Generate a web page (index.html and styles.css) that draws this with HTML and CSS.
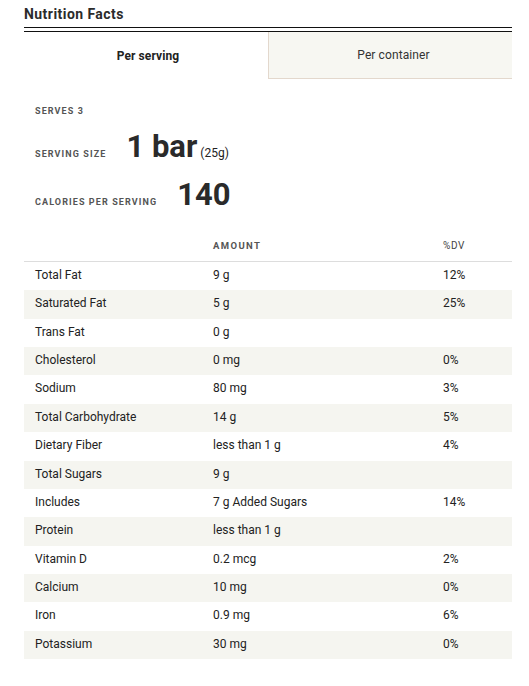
FILE: index.html
```html
<!DOCTYPE html>
<html lang="en">
<head>
<meta charset="utf-8">
<title>Nutrition Facts</title>
<link rel="stylesheet" href="styles.css">
</head>
<body>
<div class="wrap">
  <h2 class="title">Nutrition Facts</h2>
  <div class="tabs">
    <div class="tab active">Per serving</div>
    <div class="tab">Per container</div>
  </div>
  <div class="summary">
    <div class="line serves"><span class="label">Serves 3</span></div>
    <div class="line size"><span class="label">Serving size</span><span class="big">1 bar</span><span class="small">(25g)</span></div>
    <div class="line cal"><span class="label">Calories per serving</span><span class="big">140</span></div>
  </div>
  <div class="table">
    <div class="row head"><span></span><span>Amount</span><span>%DV</span></div>
    <div class="row"><span>Total Fat</span><span>9 g</span><span>12%</span></div>
    <div class="row alt"><span>Saturated Fat</span><span>5 g</span><span>25%</span></div>
    <div class="row"><span>Trans Fat</span><span>0 g</span><span></span></div>
    <div class="row alt"><span>Cholesterol</span><span>0 mg</span><span>0%</span></div>
    <div class="row"><span>Sodium</span><span>80 mg</span><span>3%</span></div>
    <div class="row alt"><span>Total Carbohydrate</span><span>14 g</span><span>5%</span></div>
    <div class="row"><span>Dietary Fiber</span><span>less than 1 g</span><span>4%</span></div>
    <div class="row alt"><span>Total Sugars</span><span>9 g</span><span></span></div>
    <div class="row"><span>Includes</span><span>7 g Added Sugars</span><span>14%</span></div>
    <div class="row alt"><span>Protein</span><span>less than 1 g</span><span></span></div>
    <div class="row"><span>Vitamin D</span><span>0.2 mcg</span><span>2%</span></div>
    <div class="row alt"><span>Calcium</span><span>10 mg</span><span>0%</span></div>
    <div class="row"><span>Iron</span><span>0.9 mg</span><span>6%</span></div>
    <div class="row alt"><span>Potassium</span><span>30 mg</span><span>0%</span></div>
  </div>
</div>
</body>
</html>
```

FILE: styles.css
```css
* { box-sizing: border-box; }
body {
  margin: 0;
  background: #fff;
  font-family: Roboto, "Liberation Sans", Arial, sans-serif;
  color: #222;
}
.wrap {
  margin-left: 24px;
  width: 488px;
}
.title {
  margin: 0;
  padding-top: 5px;
  height: 28px;
  font-size: 14px;
  line-height: 18px;
  font-weight: 700;
  letter-spacing: 0.45px;
  color: #2b2b2b;
  border-bottom: 1px solid #111;
}
.tabs {
  margin-top: 3px;
  border-top: 1px solid #111;
  display: grid;
  grid-template-columns: 244px 244px;
}
.tab {
  height: 47px;
  display: flex;
  align-items: center;
  justify-content: center;
  font-size: 12px;
  letter-spacing: 0.1px;
  color: #333;
  background: #f7f7f2;
  border-left: 1px solid #e3d8cd;
  border-bottom: 1px solid #e3d8cd;
  padding-left: 6px;
}
.tab.active {
  background: #fff;
  border: none;
  font-weight: 700;
  color: #222;
  padding-left: 4px;
}
.summary {
  padding-left: 11px;
  padding-top: 26px;
}
.line {
  display: flex;
  align-items: baseline;
}
.label {
  font-size: 9px;
  line-height: 12px;
  font-weight: 700;
  letter-spacing: 1.1px;
  text-transform: uppercase;
  color: #555;
  margin-right: 20px;
}
.big {
  font-size: 31px;
  line-height: 31px;
  font-weight: 700;
  color: #2a2a2a;
}
.small {
  font-size: 12px;
  margin-left: 3px;
  color: #222;
}
.size { margin-top: 14px; }
.cal { margin-top: 18px; }
.cal .big { font-size: 31px; line-height: 30px; }
.table {
  margin-top: 22px;
}
.row {
  display: grid;
  grid-template-columns: 177px 231px 1fr;
  font-size: 12px;
  line-height: 16px;
  height: 28.36px;
  padding-top: 5px;
}
.row span:first-child { padding-left: 11px; }
.row span:nth-child(2) { padding-left: 12px; }
.row span:nth-child(3) { padding-left: 11px; }
.row.alt { background: #f5f5f0; }
.row.head {
  height: auto;
  padding-top: 8px;
  padding-bottom: 9px;
  font-size: 9.5px;
  line-height: 12px;
  font-weight: 700;
  letter-spacing: 1.4px;
  text-transform: uppercase;
  color: #555;
  border-bottom: 1px solid #ddd;
}
.row.head span:nth-child(3) { letter-spacing: 0.6px; font-size: 10px; font-weight: 400; color: #444; }
```
